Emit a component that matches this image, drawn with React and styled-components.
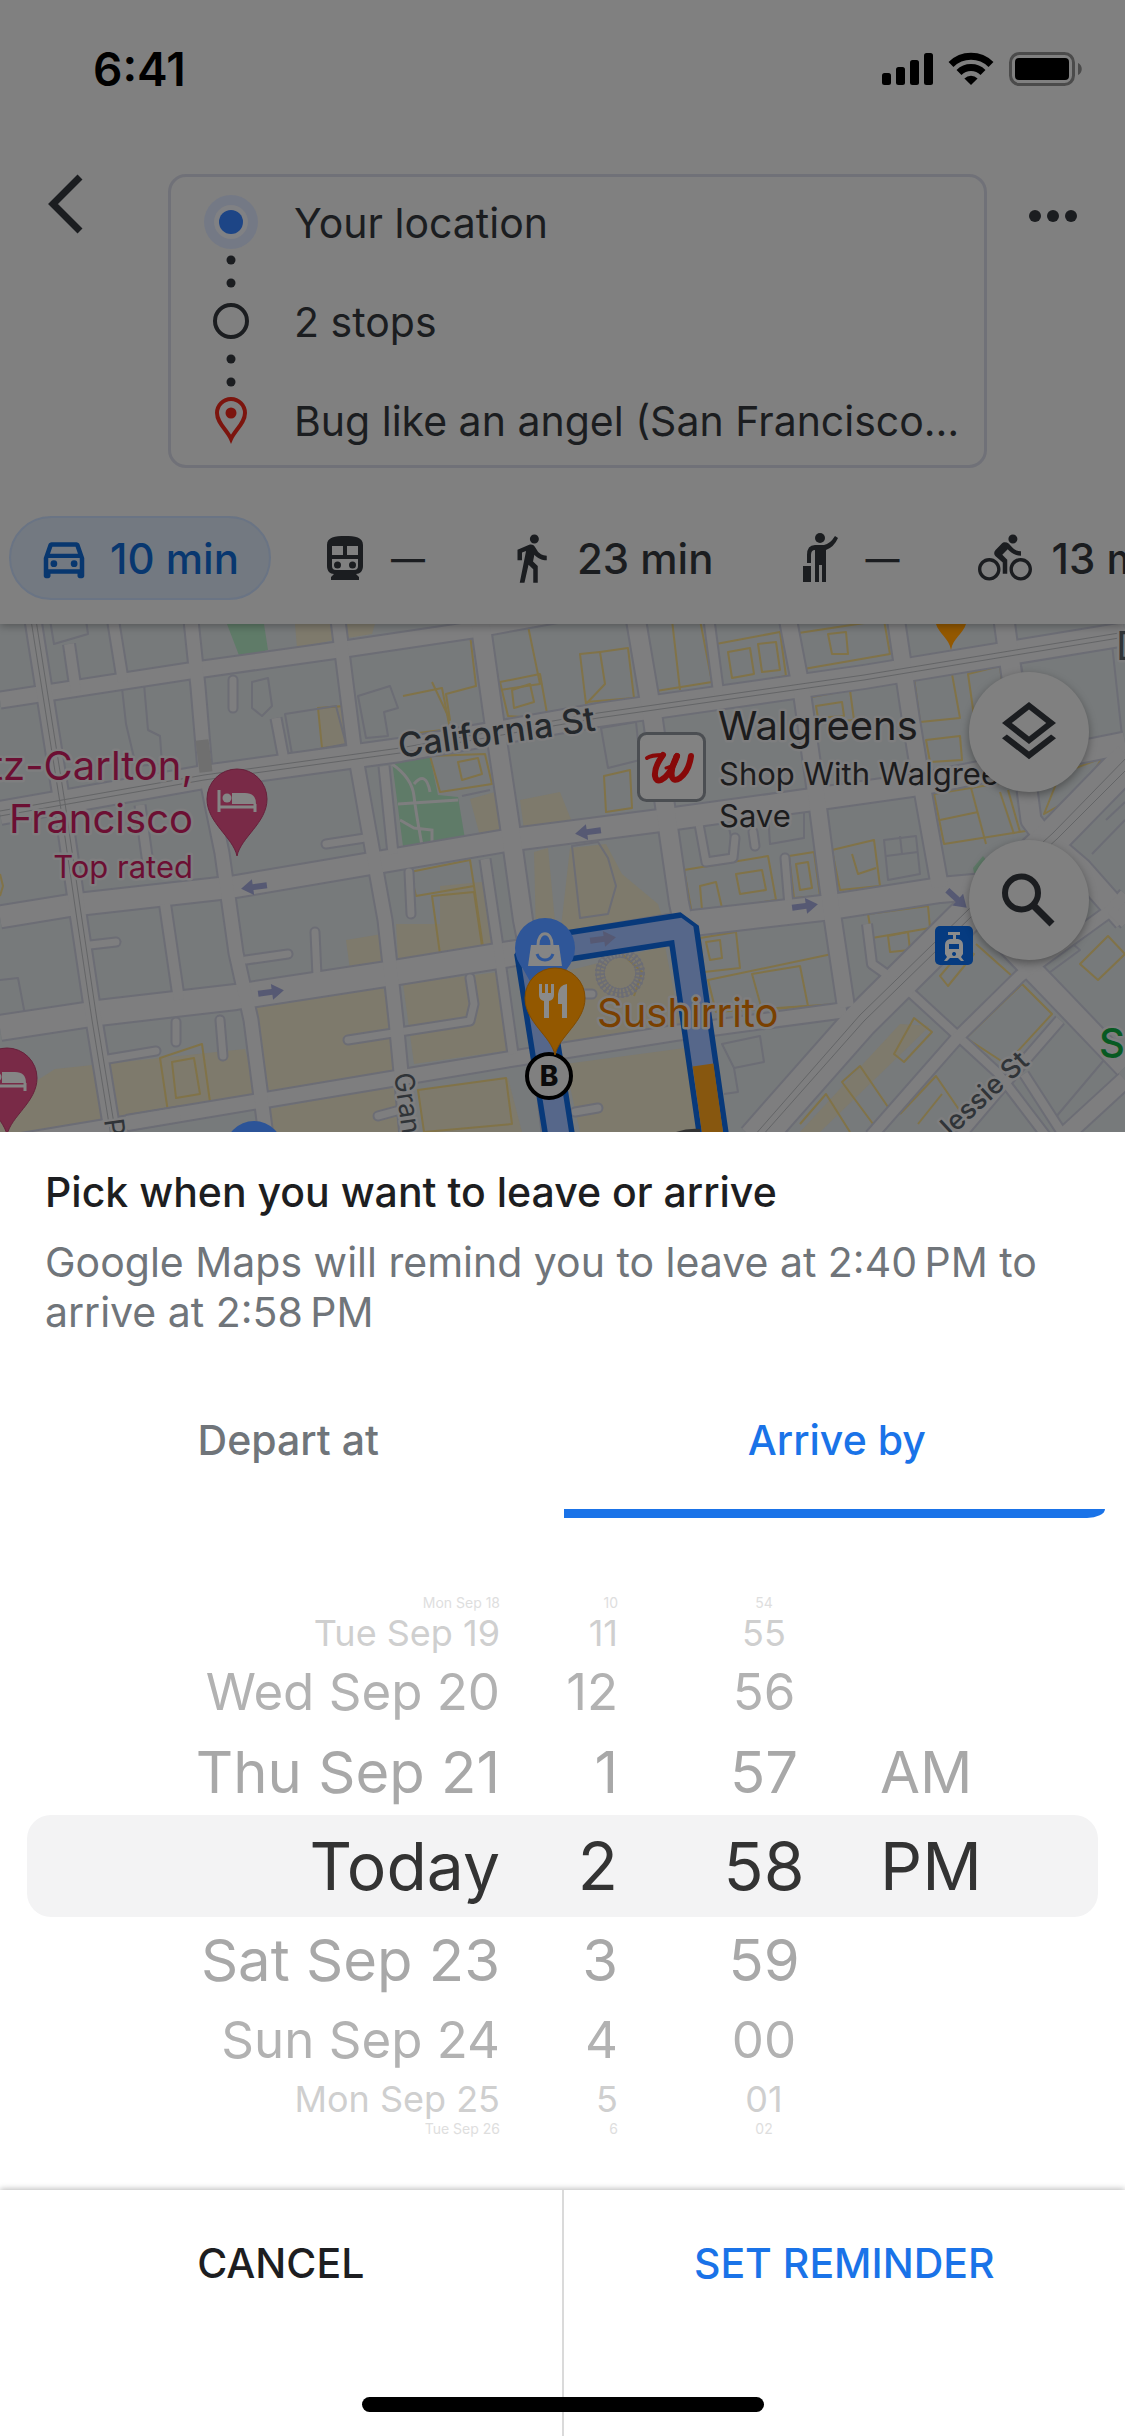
import React, { useState } from "react";
import styled, { createGlobalStyle } from "styled-components";
import {
  MdOutlineDirectionsCar,
  MdDirectionsWalk,
  MdDirectionsBike,
  MdOutlineLayers,
} from "react-icons/md";

const GlobalStyle = createGlobalStyle`
  *, *::before, *::after { box-sizing: border-box; }
  body {
    margin: 0;
    background: #ffffff;
    font-family: Inter, Roboto, "Liberation Sans", sans-serif;
    -webkit-font-smoothing: antialiased;
  }
  button { font: inherit; color: inherit; background: none; border: 0; padding: 0; cursor: pointer; }
  h1, p, ol { margin: 0; padding: 0; }
`;

const Screen = styled.div`
  position: relative;
  display: flex;
  flex-direction: column;
  min-height: 100vh;
  overflow: hidden;
`;

/* ---------- dimmed header ---------- */

const TopPanel = styled.header`
  background: #808080;
  color: #1b1d20;
  padding-bottom: 24px;
  position: relative;
  z-index: 1;
  box-shadow: 0 2px 8px rgba(0, 0, 0, 0.3);
`;

const StatusBar = styled.div`
  display: flex;
  justify-content: space-between;
  align-items: center;
  height: 138px;
  padding: 0 42px 0 93px;
  color: #000;
`;

const Clock = styled.time`
  font-size: 46px;
  line-height: 48px;
  font-weight: 600;
`;

const DirectionsRow = styled.div`
  display: grid;
  grid-template-columns: 168px minmax(0, 1fr) 138px;
  align-items: start;
  padding-top: 36px;
`;

const BackButton = styled.button`
  display: flex;
  padding-left: 44px;
`;

const MoreButton = styled.button`
  display: flex;
  padding: 30px 0 0 36px;
`;

const RouteCard = styled.section`
  display: flex;
  height: 294px;
  border: 3px solid #707178;
  border-radius: 18px;
  overflow: hidden;
`;

const RouteRail = styled.svg`
  flex: none;
  margin: 0 36px 0 30px;
`;

const StopList = styled.ol`
  flex: 1;
  min-width: 0;
  list-style: none;
  display: flex;
  flex-direction: column;
  gap: 49px;
  padding: 21px 20px 19px 0;
`;

const Stop = styled.li`
  font-size: 41px;
  line-height: 50px;
  white-space: nowrap;
  overflow: hidden;
  text-overflow: ellipsis;
`;

const ModeBar = styled.nav`
  display: flex;
  gap: 19px;
  margin-top: 48px;
  padding-left: 9px;
  overflow: hidden;
`;

const ModeChip = styled.button`
  display: flex;
  flex: none;
  align-items: center;
  gap: 19px;
  height: 84px;
  padding: 0 30px 0 26px;
  border: 2px solid ${(p) => (p.$active ? "#6a7484" : "transparent")};
  border-radius: 42px;
  background: ${(p) => (p.$active ? "#737981" : "transparent")};
  color: ${(p) => (p.$active ? "#08376f" : "#1b1d20")};
  font-size: ${(p) => (p.$unavailable ? "34px" : "42px")};
  font-weight: 500;
  white-space: nowrap;
  svg { flex: none; }
`;

/* ---------- map ---------- */

const MapView = styled.section`
  position: relative;
  height: 508px;
  overflow: hidden;
  background: #777a7b;
`;

const MapCanvas = styled.svg`
  display: block;
  width: 100%;
  height: 100%;
  font-family: Inter, Roboto, "Liberation Sans", sans-serif;
`;

const MapControls = styled.div`
  position: absolute;
  top: 48px;
  right: 36px;
  display: flex;
  flex-direction: column;
  gap: 48px;
`;

const RoundButton = styled.button`
  display: flex;
  align-items: center;
  justify-content: center;
  width: 120px;
  height: 120px;
  border-radius: 50%;
  background: #808080;
  color: #1b1d20;
  box-shadow: 0 3px 8px rgba(0, 0, 0, 0.35);
`;

/* ---------- time sheet ---------- */

const Sheet = styled.main`
  flex: 1;
  display: flex;
  flex-direction: column;
  background: #ffffff;
`;

const Intro = styled.div`
  padding: 35px 45px 0;
`;

const Title = styled.h1`
  font-size: 41px;
  line-height: 50px;
  font-weight: 500;
  color: #1d1e21;
`;

const Description = styled.p`
  padding-top: 20px;
  font-size: 41px;
  line-height: 50px;
  color: #70757a;
`;

const Tabs = styled.div`
  display: flex;
  padding: 44px 14px 0;
`;

const Tab = styled.button`
  flex: 1;
  height: 128px;
  padding-bottom: 11px;
  font-size: 41px;
  font-weight: 500;
  color: ${(p) => (p.$active ? "#1a73e8" : "#70757a")};
`;

const IndicatorTrack = styled.div`
  display: grid;
  grid-template-columns: 1fr 1fr;
  padding: 0 20px 0 22px;
`;

const Indicator = styled.div`
  grid-column: ${(p) => p.$column};
  height: 9px;
  background: #1a73e8;
  border-bottom-right-radius: ${(p) => (p.$column === 2 ? "18px 9px" : "0")};
  border-bottom-left-radius: ${(p) => (p.$column === 1 ? "18px 9px" : "0")};
`;

const Wheel = styled.div`
  display: grid;
  align-items: center;
  margin-top: 77px;
`;

const SelectionBand = styled.div`
  grid-area: 1 / 1;
  height: 102px;
  margin: 0 27px;
  border-radius: 24px;
  background: #f3f3f4;
`;

const WheelColumns = styled.div`
  grid-area: 1 / 1;
  display: grid;
  grid-template-columns: 500fr 118fr 262fr 245fr;
`;

const WheelColumn = styled.div`
  display: flex;
  flex-direction: column;
  align-items: ${(p) => p.$align};
  padding-left: ${(p) => p.$inset || 0}px;
`;

const wheelRows = [
  { height: 102, size: 66, color: "#333333" },
  { height: 86, size: 58, color: "#a8a8a8" },
  { height: 74, size: 51, color: "#b2b2b2" },
  { height: 44, size: 36, color: "#cfcfcf" },
  { height: 16, size: 14, color: "#dedede" },
];

const WheelOption = styled.button`
  height: ${(p) => wheelRows[p.$distance].height}px;
  line-height: ${(p) => wheelRows[p.$distance].height}px;
  font-size: ${(p) => wheelRows[p.$distance].size}px;
  color: ${(p) => wheelRows[p.$distance].color};
  white-space: nowrap;
`;

const Footer = styled.footer`
  flex: 1;
  display: flex;
  min-height: 246px;
  margin-top: 53px;
  background: #ffffff;
  box-shadow: 0 -1px 6px rgba(0, 0, 0, 0.28);
`;

const FooterButton = styled.button`
  flex: 1;
  display: flex;
  justify-content: center;
  align-items: flex-start;
  padding-top: 48px;
  font-size: 41px;
  line-height: 50px;
  font-weight: 500;
  color: ${(p) => (p.$primary ? "#1a73e8" : "#1d1e21")};
  & + & { border-left: 2px solid #dadada; }
`;

const HomeIndicator = styled.div`
  position: absolute;
  left: 50%;
  bottom: 24px;
  width: 402px;
  height: 15px;
  margin-left: -201px;
  border-radius: 8px;
  background: #000;
`;

/* ---------- drawings ---------- */

const StatusIcons = () => (
  <svg width="201" height="34" viewBox="0 0 201 34" aria-hidden="true">
    <rect x="0" y="21" width="9" height="12" rx="2.5" />
    <rect x="14" y="15" width="9" height="18" rx="2.5" />
    <rect x="28" y="8" width="9" height="25" rx="2.5" />
    <rect x="42" y="1" width="9" height="32" rx="2.5" />
    <g fill="none" stroke="#000" strokeWidth="7">
      <path d="M69 12.5a28.5 28.5 0 0 1 40 0" />
      <path d="M77 20.5a17 17 0 0 1 24 0" />
    </g>
    <path d="M89 33l-6.600-6.600a9.500 9.500 0 0 1 13.200 0z" />
    <rect x="128.500" y="1.500" width="63" height="31" rx="9" fill="none" stroke="#4b4b4b" strokeWidth="3" />
    <rect x="133" y="6" width="54" height="22" rx="4" />
    <path d="M196 11c5 2 5 10 0 12z" fill="#4b4b4b" />
  </svg>
);

const TrainIcon = () => (
  <svg width="54" height="54" viewBox="0 0 54 54" aria-hidden="true">
    <path
      fillRule="evenodd"
      fill="currentColor"
      d="M9 14c0-8 8-9 18-9s18 1 18 9v21c0 5-3 8-7 8l3 3v3H13v-3l3-3c-4 0-7-3-7-8zM14 15v9h11v-9zM29 15v9h11v-9zM14 28v7q0 4 4 4h18q4 0 4-4v-7z"
    />
    <circle cx="19.500" cy="34" r="3.500" fill="currentColor" />
    <circle cx="34.500" cy="34" r="3.500" fill="currentColor" />
  </svg>
);

const HailIcon = () => (
  <svg width="54" height="54" viewBox="0 0 54 54" fill="currentColor" aria-hidden="true">
    <circle cx="28" cy="7" r="5" />
    <rect x="11" y="35" width="8" height="16" />
    <path d="M15 32v-8q0-10 8-10h9q6-1 11-9l3 2q-4 9-12 12v32h-4V34h-3v17h-4V19q-4 0-4 5v8z" />
  </svg>
);

const HotelPin = ({ x, y }) => (
  <g transform={`translate(${x} ${y})`}>
    <path d="M0 57C-4 38-30 24-30 0a30 30 0 0 1 60 0C30 24 4 38 0 57z" fill="#792a47" stroke="#66213b" strokeWidth="1" />
    <path d="M-18-9v22M-18 8h36M18 13V5" stroke="#858585" strokeWidth="3" fill="none" />
    <path d="M-5 5V-6H8q11 0 11 11z" fill="#858585" />
    <circle cx="-10" cy="-1" r="4.500" fill="#858585" />
  </g>
);

const roads = [
  [15, "0,76 196,46 338,26 472,6 560,-10"],
  [22, "0,189 204,153 400,126 598,91 864,53 1125,10"],
  [21, "0,293 73,281 233,263 374,239 509,216 664,196 809,176 922,160 1125,119"],
  [24, "0,404 98,389 236,373 393,349 516,329 693,299 831,283 940,266 985,262"],
  [14, "127,499 403,453 523,433 675,409 846,386"],
  [13, "0,520 127,499 180,490"],
  [15, "33,-4 62,179 78,289 94,396 113,512"],
  [10, "113,-4 123,58"],
  [10, "69,20 76,68"],
  [13, "191,-4 198,63 205,146 222,229 236,329 251,396 266,512"],
  [9, "140,181 148,240"],
  [10, "165,280 179,376"],
  [13, "338,-4 354,123 367,196 385,296 396,396 407,512"],
  [9, "276,94 284,136"],
  [18, "480,-4 494,96 509,196 523,296 533,346 552,512"],
  [18, "636,-4 653,96 668,203 679,279 690,330"],
  [9, "709,-4 719,72"],
  [16, "788,-4 802,69 817,176 831,283 846,383"],
  [16, "896,-4 911,96 922,163 940,263"],
  [19, "1004,-4 1018,96 1031,196 1053,225"],
  [9, "384,142 393,230"],
  [9, "485,235 499,330 513,430"],
  [22, "1045,215 1080,245 1125,296"],
  [20, "1005,318 1060,375 1125,443"],
  [8, "911,369 998,449 1046,512"],
  [11, "871,512 958,413 1020,352 1111,286 1125,270"],
  [9, "1060,396 1000,465 960,512"],
  [9, "1111,286 1125,300"],
  [16, "1125,456 1064,512"],
  [8, "1024,450 1064,512"],
  [34, "755,516 860,397 969,289 1053,213 1130,134"],
  [8, "867,300 872,340 903,362"],
];

const alleys = [
  "233,56 233,84", "326,220 365,214", "315,308 317,352", "246,336 288,330", "90,321 116,318",
  "176,398 176,418", "220,396 223,432", "108,435 156,427", "348,416 470,397 474,380 470,354",
  "409,248 411,290", "378,492 400,486", "753,208 755,222", "699,200 706,238 733,234 735,214",
  "785,234 789,282", "569,370 592,370", "575,488 598,484",
];

const yellowAreas = [
  "295,0 331,0 334,16 297,24", "345,0 376,-4 372,10 347,14", "318,84 344,82 350,122 322,124",
  "253,381 383,363 400,445 270,473", "403,360 506,347 518,425 414,440",
  "396,300 440,300 440,262 482,258 495,320 398,336", "346,316 382,310 384,340 350,346",
  "418,466 508,454 522,508 424,508", "55,445 245,425 257,470 127,492 60,508 0,508 0,480",
  "270,485 400,460 404,508 273,508", "534,228 548,224 556,308 536,312", "570,224 606,220 622,250 658,280 664,300 560,312",
  "555,350 665,322 682,410 565,424", "565,440 685,424 702,508 580,508", "470,175 495,168 505,206 480,212",
  "520,176 560,168 572,198 524,206", "800,508 900,400 930,402 820,508 760,508",
];

const yellowBuildings = [
  "428,18 470,10 476,62 446,70 450,96 432,58", "403,72 442,64 450,105 410,110", "490,9 528,2 540,60 500,66z",
  "318,84 344,82 350,122 322,124z", "500,58 540,50 548,95 508,92z", "512,66 530,60 534,78 514,84z",
  "430,132 485,130 492,160 440,168z", "458,138 478,134 482,150 462,156z",
  "410,248 470,236 474,262 416,272z", "432,272 474,268 482,322 440,330z", "474,262 484,330",
  "160,434 202,420 210,478 168,488z", "172,438 194,434 200,470 176,474z", "418,466 506,454 512,500 424,508z",
  "580,30 600,28 605,60 586,80z", "600,28 628,24 634,74 586,78", "640,-4 650,68 712,58 700,-4z", "672,-4 680,66",
  "716,20 780,8 786,52 722,64z", "728,28 750,24 754,50 732,54z", "758,20 776,18 780,46 762,48z",
  "792,10 884,-4 890,30 798,46z", "828,10 846,8 848,30 832,30z", "806,74 850,66 854,96 812,100z", "816,82 842,78 844,92 818,94z",
  "914,54 952,50 960,94 920,98z", "968,50 1000,42 1006,90 974,92z", "926,116 960,112 962,136 930,138z",
  "934,170 1020,156 1032,206 944,220z", "970,160 986,220", "1000,168 1014,210", "1008,166 1020,208", "940,196 978,188",
  "684,246 768,232 776,276 692,290z", "736,250 762,246 766,266 740,270z", "700,262 716,258 722,284 702,286z",
  "789,232 814,228 820,272 794,274z", "796,240 808,238 812,264 800,266z", "832,226 874,216 880,262 840,266z", "852,230 858,250 876,244",
  "868,290 928,282 930,304 872,314z", "888,312 908,308 910,326 890,328z", "700,314 736,308 740,344 704,348z", "706,318 720,316 722,334 710,336z",
  "708,356 832,330 838,380 716,388z", "752,350 800,342 808,382 762,386z",
  "894,430 914,394 932,408 904,438z", "842,458 860,442 890,486 876,504z", "966,414 1022,360 1052,390 1006,440z",
  "940,352 964,324 974,330 948,362z", "976,320 1012,352 1000,366", "1080,340 1108,312 1125,330 1098,356z",
  "900,490 936,452 962,490", "918,500 942,470", "800,500 826,470 850,508", "604,152 630,146 632,184 606,188z", "1060,150 1102,134 1080,170 1044,190z",
  "0,250 3,262 0,272", "622,330 642,348 634,372",
];

const greyBuildings = [
  "122,64 144,60 148,106 160,112 162,140 136,142 126,100z", "252,58 268,54 272,82 262,92 252,84z", "50,-4 54,20 88,10 86,-4",
  "358,72 390,62 398,84 384,88 388,112 366,114z", "462,172 490,166", "572,222 598,218 608,234 616,262 608,290 580,294z",
  "601,104 636,98 640,136 608,144z", "700,202 728,198 734,230 706,234z", "768,190 804,184 804,214 770,220z",
  "884,216 916,212 920,250 888,256z", "886,232 918,228", "900,212 902,230", "1106,196 1125,178", "1092,230 1125,196",
  "1034,360 1080,326 1058,308", "722,420 760,412 764,438 734,444z", "734,444 738,468 724,470", "0,356 18,354 26,396",
  "285,90 336,82 346,120 292,130z", "1020,36 1112,20 1122,112 1036,120z", "1090,420 1104,436 1050,500",
];

const DirectionArrow = ({ x, y, angle }) => (
  <path transform={`translate(${x} ${y}) rotate(${angle})`} d="M-13-3H1v-5L13 0 1 8V3h-14z" fill="#565973" />
);

const CityMap = () => (
  <MapCanvas viewBox="0 0 1125 508" preserveAspectRatio="xMidYMid slice" role="img" aria-label="Map">
    <rect width="1125" height="508" fill="#777a7b" />
    {yellowAreas.map((p) => <polygon key={p} points={p} fill="#7e7a6c" />)}
    <g fill="#5f7b68">
      <path d="M227 0h37l4 26-28 8zM392 137l38-4 8 38 20 2 8 48-62 9zM973 244l10-12 6 8-14 14zM955 256l16-6v20z" />
    </g>
    <g stroke="#7e7e7f" strokeWidth="3" fill="none">
      <path d="M392 140q20 14 22 32t10 60M398 180l60-4M400 196l14 8 18 2v16M414 160q12-14 16 8" />
    </g>
    <g fill="none" strokeLinejoin="round">
      {yellowBuildings.map((p) => <path key={p} d={`M${p}`} stroke="#817348" strokeWidth="2" />)}
      {greyBuildings.map((p) => <path key={p} d={`M${p}`} stroke="#6c6d75" strokeWidth="2" />)}
      <g strokeLinecap="round">
        {alleys.map((p) => <polyline key={p} points={p} stroke="#6c6d75" strokeWidth="11" />)}
      </g>
      {roads.map(([w, p]) => <polyline key={p} points={p} stroke="#6c6d75" strokeWidth={w + 4} />)}
      <g strokeLinecap="round">
        {alleys.map((p) => <polyline key={p} points={p} stroke="#7e7e7f" strokeWidth="7" />)}
      </g>
      {roads.map(([w, p]) => <polyline key={p} points={p} stroke="#7e7e7f" strokeWidth={w} />)}
      <path d="M202 116l4 32" stroke="#6f6f6f" strokeWidth="13" />
      <g stroke="#646567" strokeWidth="1">
        <path d="M31-4L60 179 76 289 92 396 111 512M36-4L65 179 81 289 97 396 116 512" />
        <path d="M0 187L204 151 400 124 598 89 864 51 1125 8M0 192L204 156 400 129 598 94 864 56 1125 13" />
        <path d="M754 512L860 391 969 285 1053 209 1130 130M762 512L864 397 973 291 1057 215 1130 142" />
      </g>
    </g>
    <circle cx="620" cy="349" r="20" fill="none" stroke="#6c6d75" strokeWidth="10" strokeDasharray="2 2" />
    <g fill="none" stroke="#6c6d75" strokeWidth="1">
      <circle cx="620" cy="349" r="16" />
      <circle cx="620" cy="349" r="20" />
      <circle cx="620" cy="349" r="24" />
    </g>

    <g fill="none" strokeLinejoin="bevel">
      <path d="M559 512L530 328 683 304 713 512" stroke="#08397a" strokeWidth="32" />
      <path d="M559 512L530 328 683 304 713 512" stroke="#56678a" strokeWidth="21" />
      <path d="M703 441L713 512" stroke="#87570f" strokeWidth="21" />
    </g>
    <path d="M676 508q12-4 24-3v4z" fill="#333" />

    <DirectionArrow x={254} y={263} angle={172} />
    <DirectionArrow x={271} y={368} angle={-8} />
    <DirectionArrow x={588} y={208} angle={172} />
    <DirectionArrow x={805} y={282} angle={-8} />
    <DirectionArrow x={603} y={315} angle={-8} />
    <DirectionArrow x={957} y={275} angle={42} />

    <g stroke="#7e7e7f" strokeWidth="5" strokeLinejoin="round" paintOrder="stroke">
      <g fill="#6c0f33" textAnchor="end">
        <text x="193" y="156" fontSize="40">tz-Carlton,</text>
        <text x="193" y="209" fontSize="40">Francisco</text>
        <text x="193" y="254" fontSize="31">Top rated</text>
      </g>
      <text x="0" y="0" transform="translate(400 134) rotate(-8)" fontSize="34" fontWeight="500" fill="#24282c">California St</text>
      <g fill="#1c1c1d">
        <text x="718" y="116" fontSize="40">Walgreens</text>
        <text x="719" y="161" fontSize="31">Shop With Walgreens</text>
        <text x="719" y="203" fontSize="31">Save</text>
      </g>
      <text x="597" y="403" fontSize="40" fill="#7a4000">Sushirrito</text>
      <g fill="#303438" fontSize="27">
        <text x="0" y="0" transform="translate(394 450) rotate(82)">Gran</text>
        <text x="0" y="0" transform="translate(104 496) rotate(82)">P</text>
        <text x="0" y="0" transform="translate(945 519) rotate(-43)" fontWeight="500">Jessie St</text>
      </g>
      <text x="1099" y="433" fontSize="40" fontWeight="500" fill="#075a22">S</text>
      <text x="1116" y="36" fontSize="40" fill="#303438">D</text>
    </g>

    <HotelPin x={237} y={175} />
    <HotelPin x={7} y={454} />
    <circle cx="254" cy="526" r="29" fill="#2c5498" />
    <path d="M951 26c-2-12-12-16-15-26h30c-3 10-13 14-15 26z" fill="#935800" />

    <circle cx="545" cy="324" r="30" fill="#2f5698" />
    <path d="M518 336L545 384 572 336z" fill="#2f5698" />
    <path d="M531 321h28l3 21h-34z" fill="#858585" />
    <path d="M538 321c0-15 14-15 14 0" fill="none" stroke="#858585" strokeWidth="3" />
    <path d="M537 330c3 8 13 8 16 0" fill="none" stroke="#2f5698" strokeWidth="3" />

    <circle cx="549" cy="452" r="22" fill="#808080" stroke="#000" strokeWidth="4" />
    <text x="549" y="462" textAnchor="middle" fontSize="28" fontWeight="800" fill="#0b0b0b">B</text>

    <path d="M555 431c-4-19-30-33-30-57a30 30 0 0 1 60 0c0 24-26 38-30 57z" fill="#935800" stroke="#804b00" strokeWidth="1" />
    <path d="M539 360h3v9h3v-9h3v9h3v-9h3v11q0 5-5 6v17h-5v-17q-5-1-5-6zM567 360v34h-5v-14h-4v-10q1-9 9-10z" fill="#8a8a8a" />

    <rect x="638.500" y="109.500" width="66" height="67" rx="8" fill="#828282" stroke="#4b4e52" strokeWidth="3" />
    <g fill="none" stroke="#870909" strokeLinecap="round" strokeLinejoin="round">
      <path d="M647 134q4-3 16-3" strokeWidth="4" />
      <path d="M663 131q-9 12-8 21 1 6 6 4 9-4 16-24" strokeWidth="6" />
      <path d="M677 132q-7 13-5 21 2 5 8 1 9-7 11-22" strokeWidth="6" />
      <path d="M666 144q9-2 9-12" strokeWidth="3" />
    </g>

    <rect x="935" y="302" width="38" height="39" rx="5" fill="#063b80" />
    <path fillRule="evenodd" fill="#8c8c8c" d="M948 308h12v3h-4v4h2q5 1 5 6v9l-2 3 3 4h-3l-3-3h-8l-3 3h-3l3-4-2-3v-9q0-5 5-6h3v-4h-5zM949 320v5h10v-5zM954 328a2 2 0 1 0 .1 0z" />
  </MapCanvas>
);

const SearchIcon = () => (
  <svg width="60" height="60" viewBox="0 0 60 60" fill="none" stroke="currentColor" aria-hidden="true">
    <circle cx="22.500" cy="23" r="16.500" strokeWidth="6" />
    <path d="M34 35L53 54" strokeWidth="7" />
  </svg>
);

/* ---------- data ---------- */

const modes = [
  { id: "drive", label: "10 min", name: "Drive", icon: <MdOutlineDirectionsCar size={54} /> },
  { id: "transit", name: "Transit", icon: <TrainIcon /> },
  { id: "walk", label: "23 min", name: "Walk", icon: <MdDirectionsWalk size={54} /> },
  { id: "ride", name: "Ride service", icon: <HailIcon /> },
  { id: "bike", label: "13 min", name: "Bike", icon: <MdDirectionsBike size={54} /> },
];

const wheels = [
  {
    name: "Date",
    align: "flex-end",
    values: ["Mon Sep 18", "Tue Sep 19", "Wed Sep 20", "Thu Sep 21", "Today", "Sat Sep 23", "Sun Sep 24", "Mon Sep 25", "Tue Sep 26"],
  },
  { name: "Hour", align: "flex-end", values: ["10", "11", "12", "1", "2", "3", "4", "5", "6"] },
  { name: "Minute", align: "center", inset: 30, values: ["54", "55", "56", "57", "58", "59", "00", "01", "02"] },
  { name: "AM or PM", align: "flex-start", values: [null, null, null, "AM", "PM", null, null, null, null] },
];

const tabs = ["Depart at", "Arrive by"];

const reminder = { leave: "2:40\u2009PM", arrive: "2:58\u2009PM" };

export default function App() {
  const [mode, setMode] = useState("drive");
  const [tab, setTab] = useState(1);

  return (
    <>
      <GlobalStyle />
      <Screen>
        <TopPanel>
          <StatusBar>
            <Clock>6:41</Clock>
            <StatusIcons />
          </StatusBar>
          <DirectionsRow>
            <BackButton aria-label="Back">
              <svg width="44" height="60" viewBox="0 0 44 60" fill="none" stroke="currentColor" strokeWidth="7" aria-hidden="true">
                <path d="M36 3L9 30 36 57" />
              </svg>
            </BackButton>
            <RouteCard>
              <RouteRail width="57" height="288" viewBox="0 0 57 288" aria-hidden="true">
                <circle cx="30" cy="45" r="27" fill="#747985" />
                <circle cx="30" cy="45" r="17" fill="#808184" />
                <circle cx="30" cy="45" r="12" fill="#1d4586" />
                <g fill="#1b1d20">
                  <circle cx="30" cy="83" r="4.500" />
                  <circle cx="30" cy="106" r="4.500" />
                  <circle cx="30" cy="182" r="4.500" />
                  <circle cx="30" cy="205" r="4.500" />
                </g>
                <circle cx="30" cy="144" r="16" fill="none" stroke="#1b1d20" strokeWidth="4" />
                <path d="M30 262c-4-9-14-16-14-26a14 14 0 0 1 28 0c0 10-10 17-14 26z" fill="none" stroke="#7c150e" strokeWidth="4" />
                <circle cx="30" cy="236" r="5.500" fill="#7c150e" />
              </RouteRail>
              <StopList>
                <Stop>Your location</Stop>
                <Stop>2 stops</Stop>
                <Stop>Bug like an angel (San Francisco…</Stop>
              </StopList>
            </RouteCard>
            <MoreButton aria-label="More options">
              <svg width="60" height="24" viewBox="0 0 60 24" fill="currentColor" aria-hidden="true">
                <circle cx="12" cy="12" r="6" />
                <circle cx="30" cy="12" r="6" />
                <circle cx="48" cy="12" r="6" />
              </svg>
            </MoreButton>
          </DirectionsRow>
          <ModeBar aria-label="Travel mode">
            {modes.map((m) => (
              <ModeChip
                key={m.id}
                title={m.name}
                $active={m.id === mode}
                $unavailable={!m.label}
                onClick={() => setMode(m.id)}
              >
                {m.icon}
                {m.label || "—"}
              </ModeChip>
            ))}
          </ModeBar>
        </TopPanel>

        <MapView>
          <CityMap />
          <MapControls>
            <RoundButton aria-label="Layers"><MdOutlineLayers size={72} /></RoundButton>
            <RoundButton aria-label="Search"><SearchIcon /></RoundButton>
          </MapControls>
        </MapView>

        <Sheet>
          <Intro>
            <Title>Pick when you want to leave or arrive</Title>
            <Description>
              {`Google Maps will remind you to leave at ${reminder.leave} to arrive at ${reminder.arrive}`}
            </Description>
          </Intro>
          <Tabs role="tablist">
            {tabs.map((label, i) => (
              <Tab key={label} role="tab" aria-selected={tab === i} $active={tab === i} onClick={() => setTab(i)}>
                {label}
              </Tab>
            ))}
          </Tabs>
          <IndicatorTrack>
            <Indicator $column={tab + 1} />
          </IndicatorTrack>
          <Wheel>
            <SelectionBand />
            <WheelColumns>
              {wheels.map((wheel) => (
                <WheelColumn
                  key={wheel.name}
                  role="listbox"
                  aria-label={wheel.name}
                  $align={wheel.align}
                  $inset={wheel.inset}
                >
                  {wheel.values.map((value, i) => {
                    const distance = Math.abs(i - 4);
                    return value ? (
                      <WheelOption key={i} role="option" aria-selected={i === 4} $distance={distance}>
                        {value}
                      </WheelOption>
                    ) : (
                      <WheelOption key={i} as="span" aria-hidden="true" $distance={distance} />
                    );
                  })}
                </WheelColumn>
              ))}
            </WheelColumns>
          </Wheel>
          <Footer>
            <FooterButton>CANCEL</FooterButton>
            <FooterButton $primary>SET REMINDER</FooterButton>
          </Footer>
        </Sheet>
        <HomeIndicator />
      </Screen>
    </>
  );
}
